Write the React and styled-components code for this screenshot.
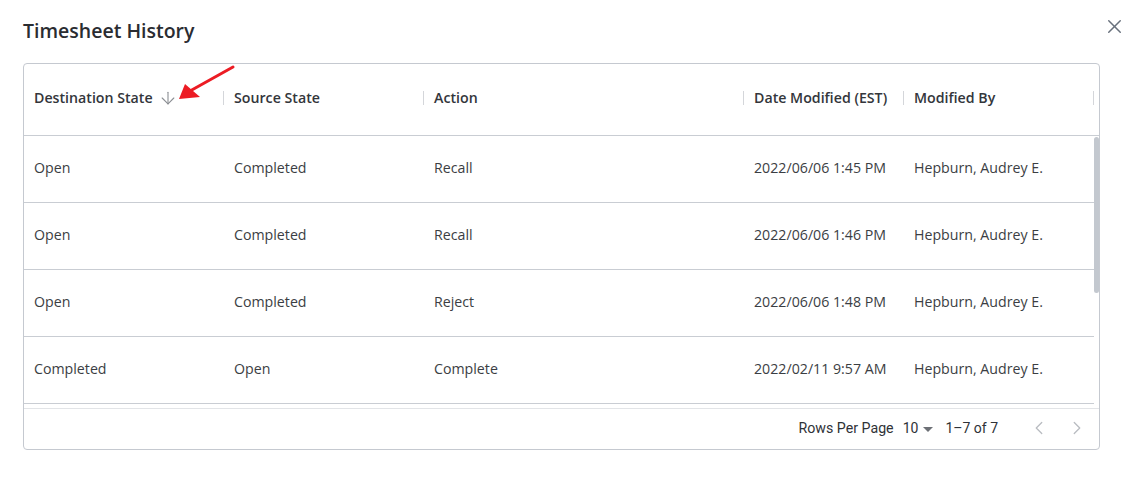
import React from "react";
import styled, { createGlobalStyle } from "styled-components";
import { ArrowDown, ChevronLeft, ChevronRight, X } from "lucide-react";

const Global = createGlobalStyle`
  html, body { margin: 0; padding: 0; background: #fff; }
  body { font-family: "Open Sans", "Liberation Sans", sans-serif; }
  * { box-sizing: border-box; }
`;

const Dialog = styled.div`
  position: relative;
  width: 1137px;
  height: 502px;
  padding: 17px 11px 0 23px;
  background: #fff;
`;

const Header = styled.div`
  display: flex;
  justify-content: space-between;
  align-items: center;
  height: 28px;
  margin-bottom: 18px;
`;

const Title = styled.h2`
  margin: 0;
  font-size: 19.5px;
  line-height: 28px;
  font-weight: 600;
  color: #2a2c31;
`;

const CloseButton = styled.button`
  display: flex;
  align-items: center;
  justify-content: center;
  width: 23px;
  height: 23px;
  padding: 0;
  margin-top: -10px;
  border: none;
  background: transparent;
  color: #68707c;
`;

const Table = styled.div`
  width: 1077px;
  border: 1px solid #c5c9d0;
  border-radius: 4px;
  overflow: hidden;
`;

const HeadRow = styled.div`
  display: flex;
  height: 72px;
  border-bottom: 1px solid #c9cdd3;
`;

const HeadCell = styled.div`
  position: relative;
  display: flex;
  align-items: center;
  width: ${(p) => p.$w}px;
  padding: 0 0 4px 10px;
  font-size: 14.2px;
  font-weight: 600;
  color: #33363b;
  &::after {
    content: "";
    position: absolute;
    right: 0;
    top: 27px;
    width: 1px;
    height: 14px;
    background: #d4d6da;
  }
`;

const SortIcon = styled.span`
  display: inline-flex;
  margin-left: 5px;
  color: #8b8e93;
`;

const BodyWrap = styled.div`
  display: flex;
  height: 272px;
`;

const Rows = styled.div`
  flex: 1;
  overflow: hidden;
`;

const ScrollTrack = styled.div`
  width: 5px;
  padding-top: 1px;
  background: #fff;
`;

const ScrollThumb = styled.div`
  height: 156px;
  border-radius: 3px;
  background: #c3c8cf;
`;

const Row = styled.div`
  display: flex;
  height: 67px;
  border-bottom: 1px solid #c9cdd3;
`;

const Cell = styled.div`
  display: flex;
  align-items: center;
  width: ${(p) => p.$w}px;
  padding: 0 0 4px 10px;
  font-size: 14.2px;
  color: #3b3e43;
  white-space: nowrap;
`;

const Footer = styled.div`
  display: flex;
  justify-content: flex-end;
  align-items: center;
  height: 41px;
  padding: 0 11px 2px 0;
  border-top: 1px solid #e2e4e7;
  font-family: Roboto, "Liberation Sans", sans-serif;
  font-size: 14px;
  color: #2f3237;
`;

const Label = styled.span`
  font-size: 14.2px;
  margin-right: 9px;
`;

const SelectBox = styled.span`
  display: inline-flex;
  align-items: center;
  gap: 5px;
  margin-right: 12px;
`;

const Caret = styled.span`
  width: 0;
  height: 0;
  border-left: 5px solid transparent;
  border-right: 5px solid transparent;
  border-top: 5px solid #6d7076;
  margin-top: 2px;
`;

const Range = styled.span`
  margin-right: 30px;
`;

const NavButton = styled.button`
  display: flex;
  align-items: center;
  justify-content: center;
  width: 22px;
  height: 22px;
  padding: 0;
  margin-left: ${(p) => p.$ml || 0}px;
  border: none;
  background: transparent;
  color: #b9bcc1;
`;

const Annotation = styled.svg`
  position: absolute;
  left: 0;
  top: 0;
  pointer-events: none;
`;

const cols = [
  { key: "dest", label: "Destination State", w: 200 },
  { key: "src", label: "Source State", w: 200 },
  { key: "action", label: "Action", w: 320 },
  { key: "date", label: "Date Modified (EST)", w: 160 },
  { key: "by", label: "Modified By", w: 190 },
];

const rows = [
  { dest: "Open", src: "Completed", action: "Recall", date: "2022/06/06 1:45 PM", by: "Hepburn, Audrey E." },
  { dest: "Open", src: "Completed", action: "Recall", date: "2022/06/06 1:46 PM", by: "Hepburn, Audrey E." },
  { dest: "Open", src: "Completed", action: "Reject", date: "2022/06/06 1:48 PM", by: "Hepburn, Audrey E." },
  { dest: "Completed", src: "Open", action: "Complete", date: "2022/02/11 9:57 AM", by: "Hepburn, Audrey E." },
  { dest: "Open", src: "Completed", action: "Recall", date: "2022/02/11 9:40 AM", by: "Hepburn, Audrey E." },
  { dest: "Completed", src: "Open", action: "Complete", date: "2022/02/11 9:32 AM", by: "Hepburn, Audrey E." },
  { dest: "Open", src: "New", action: "Create", date: "2022/02/07 8:15 AM", by: "Hepburn, Audrey E." },
];

export default function App() {
  return (
    <>
      <Global />
      <Dialog>
        <Header>
          <Title>Timesheet History</Title>
          <CloseButton aria-label="Close">
            <X size={23} strokeWidth={1.5} />
          </CloseButton>
        </Header>
        <Table>
          <HeadRow>
            {cols.map((c, i) => (
              <HeadCell key={c.key} $w={c.w}>
                {c.label}
                {i === 0 && (
                  <SortIcon>
                    <ArrowDown size={20} strokeWidth={1.3} />
                  </SortIcon>
                )}
              </HeadCell>
            ))}
          </HeadRow>
          <BodyWrap>
            <Rows>
              {rows.map((r, ri) => (
                <Row key={ri}>
                  {cols.map((c) => (
                    <Cell key={c.key} $w={c.w}>
                      {r[c.key]}
                    </Cell>
                  ))}
                </Row>
              ))}
            </Rows>
            <ScrollTrack>
              <ScrollThumb />
            </ScrollTrack>
          </BodyWrap>
          <Footer>
            <Label>Rows Per Page</Label>
            <SelectBox>
              10
              <Caret />
            </SelectBox>
            <Range>1–7 of 7</Range>
            <NavButton aria-label="Previous page">
              <ChevronLeft size={22} strokeWidth={1.4} />
            </NavButton>
            <NavButton aria-label="Next page" $ml={16}>
              <ChevronRight size={22} strokeWidth={1.4} />
            </NavButton>
          </Footer>
        </Table>
        <Annotation width="1137" height="502" viewBox="0 0 1137 502">
          <line x1="233" y1="67" x2="190" y2="91" stroke="#ec1c24" strokeWidth="3" strokeLinecap="round" />
          <polygon points="179,99 185,84 200,97" fill="#ec1c24" />
        </Annotation>
      </Dialog>
    </>
  );
}
